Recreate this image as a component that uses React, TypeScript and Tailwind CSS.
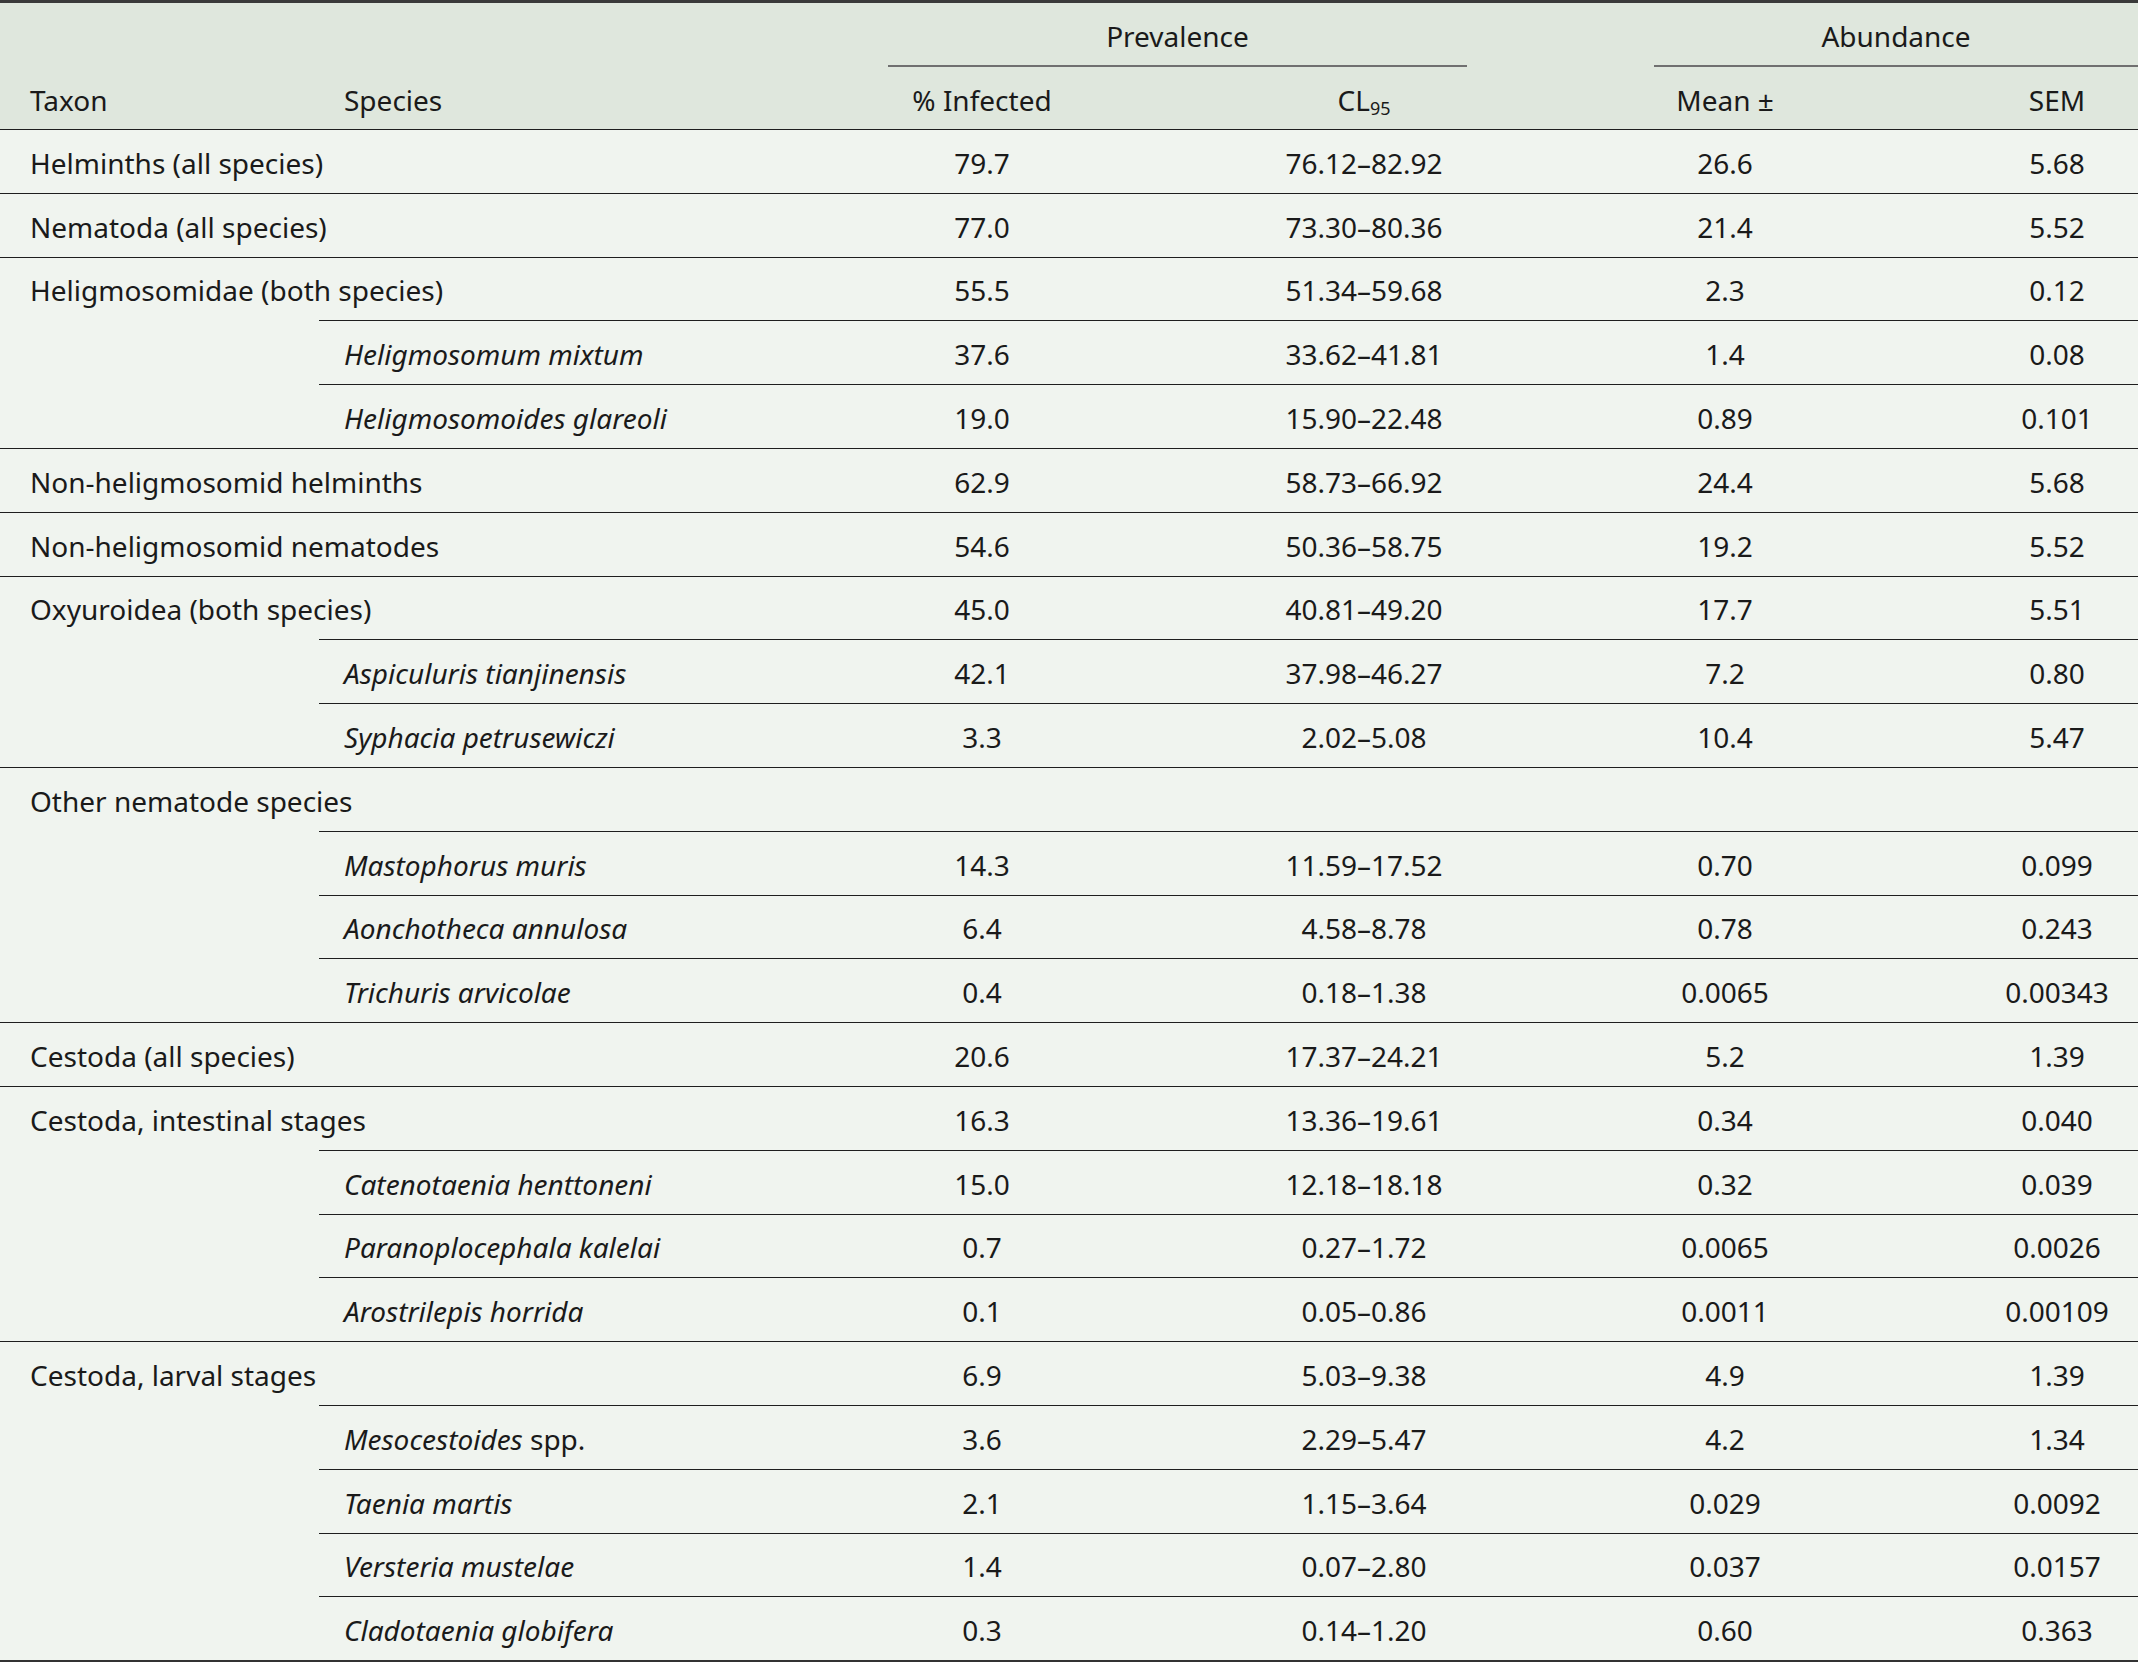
import type { ReactNode } from "react";

type Line = "full" | "indent" | "end";

interface Row {
  taxon?: string;
  species?: ReactNode;
  inf?: string;
  cl?: string;
  mean?: string;
  sem?: string;
  line: Line;
}

const rows: Row[] = [
  { taxon: "Helminths (all species)", inf: "79.7", cl: "76.12–82.92", mean: "26.6", sem: "5.68", line: "full" },
  { taxon: "Nematoda (all species)", inf: "77.0", cl: "73.30–80.36", mean: "21.4", sem: "5.52", line: "full" },
  { taxon: "Heligmosomidae (both species)", inf: "55.5", cl: "51.34–59.68", mean: "2.3", sem: "0.12", line: "indent" },
  { species: <i>Heligmosomum mixtum</i>, inf: "37.6", cl: "33.62–41.81", mean: "1.4", sem: "0.08", line: "indent" },
  { species: <i>Heligmosomoides glareoli</i>, inf: "19.0", cl: "15.90–22.48", mean: "0.89", sem: "0.101", line: "full" },
  { taxon: "Non-heligmosomid helminths", inf: "62.9", cl: "58.73–66.92", mean: "24.4", sem: "5.68", line: "full" },
  { taxon: "Non-heligmosomid nematodes", inf: "54.6", cl: "50.36–58.75", mean: "19.2", sem: "5.52", line: "full" },
  { taxon: "Oxyuroidea (both species)", inf: "45.0", cl: "40.81–49.20", mean: "17.7", sem: "5.51", line: "indent" },
  { species: <i>Aspiculuris tianjinensis</i>, inf: "42.1", cl: "37.98–46.27", mean: "7.2", sem: "0.80", line: "indent" },
  { species: <i>Syphacia petrusewiczi</i>, inf: "3.3", cl: "2.02–5.08", mean: "10.4", sem: "5.47", line: "full" },
  { taxon: "Other nematode species", line: "indent" },
  { species: <i>Mastophorus muris</i>, inf: "14.3", cl: "11.59–17.52", mean: "0.70", sem: "0.099", line: "indent" },
  { species: <i>Aonchotheca annulosa</i>, inf: "6.4", cl: "4.58–8.78", mean: "0.78", sem: "0.243", line: "indent" },
  { species: <i>Trichuris arvicolae</i>, inf: "0.4", cl: "0.18–1.38", mean: "0.0065", sem: "0.00343", line: "full" },
  { taxon: "Cestoda (all species)", inf: "20.6", cl: "17.37–24.21", mean: "5.2", sem: "1.39", line: "full" },
  { taxon: "Cestoda, intestinal stages", inf: "16.3", cl: "13.36–19.61", mean: "0.34", sem: "0.040", line: "indent" },
  { species: <i>Catenotaenia henttoneni</i>, inf: "15.0", cl: "12.18–18.18", mean: "0.32", sem: "0.039", line: "indent" },
  { species: <i>Paranoplocephala kalelai</i>, inf: "0.7", cl: "0.27–1.72", mean: "0.0065", sem: "0.0026", line: "indent" },
  { species: <i>Arostrilepis horrida</i>, inf: "0.1", cl: "0.05–0.86", mean: "0.0011", sem: "0.00109", line: "full" },
  { taxon: "Cestoda, larval stages", inf: "6.9", cl: "5.03–9.38", mean: "4.9", sem: "1.39", line: "indent" },
  { species: <><i>Mesocestoides</i> spp.</>, inf: "3.6", cl: "2.29–5.47", mean: "4.2", sem: "1.34", line: "indent" },
  { species: <i>Taenia martis</i>, inf: "2.1", cl: "1.15–3.64", mean: "0.029", sem: "0.0092", line: "indent" },
  { species: <i>Versteria mustelae</i>, inf: "1.4", cl: "0.07–2.80", mean: "0.037", sem: "0.0157", line: "indent" },
  { species: <i>Cladotaenia globifera</i>, inf: "0.3", cl: "0.14–1.20", mean: "0.60", sem: "0.363", line: "end" },
];

// columns: taxon | species | % infected | CL95 | mean | spacer | SEM
const grid =
  "grid grid-cols-[319px_569px_188px_576px_146px_178px_162px] items-center";

function DataRow({ row }: { row: Row }) {
  return (
    <div className="flex flex-col">
      <div className={`${grid} h-[62.8px] pt-[3px]`}>
        {row.taxon ? (
          <div className="col-span-2 pl-[30px] whitespace-nowrap">{row.taxon}</div>
        ) : (
          <>
            <div />
            <div className="pl-[25px] whitespace-nowrap">{row.species}</div>
          </>
        )}
        <div className="text-center">{row.inf}</div>
        <div className="text-center">{row.cl}</div>
        <div className="text-center">{row.mean}</div>
        <div />
        <div className="text-center">{row.sem}</div>
      </div>
      {row.line === "full" && <div className="border-t border-[#1e1e1e]" />}
      {row.line === "indent" && (
        <div className="ml-[319px] border-t border-[#1e1e1e]" />
      )}
      {row.line === "end" && <div className="border-t-2 border-[#333]" />}
    </div>
  );
}

export default function App() {
  return (
    <div
      className="w-[2138px] bg-[#f0f4ef] text-[28px] leading-none text-[#1a1a1a]"
      style={{ fontFamily: "'Noto Sans', 'Open Sans', sans-serif" }}
    >
      <div className="border-t-[3px] border-[#3a3a3a] bg-[#dfe7dd]">
        <div className="flex h-[62px] items-center pt-[3px]">
          <div className="w-[888px]" />
          <div className="w-[579px] text-center">Prevalence</div>
          <div className="w-[187px]" />
          <div className="w-[484px] text-center">Abundance</div>
        </div>
        <div className="flex">
          <div className="w-[888px]" />
          <div className="w-[579px] border-t-2 border-[#707070]" />
          <div className="w-[187px]" />
          <div className="w-[484px] border-t-2 border-[#707070]" />
        </div>
        <div className={`${grid} h-[63px] border-b border-[#1e1e1e] pt-[3px]`}>
          <div className="pl-[30px]">Taxon</div>
          <div className="pl-[25px]">Species</div>
          <div className="text-center whitespace-nowrap">% Infected</div>
          <div className="text-center">
            CL<sub className="text-[18px]">95</sub>
          </div>
          <div className="text-center">Mean ±</div>
          <div />
          <div className="text-center">SEM</div>
        </div>
      </div>
      {rows.map((row, i) => (
        <DataRow key={i} row={row} />
      ))}
    </div>
  );
}
